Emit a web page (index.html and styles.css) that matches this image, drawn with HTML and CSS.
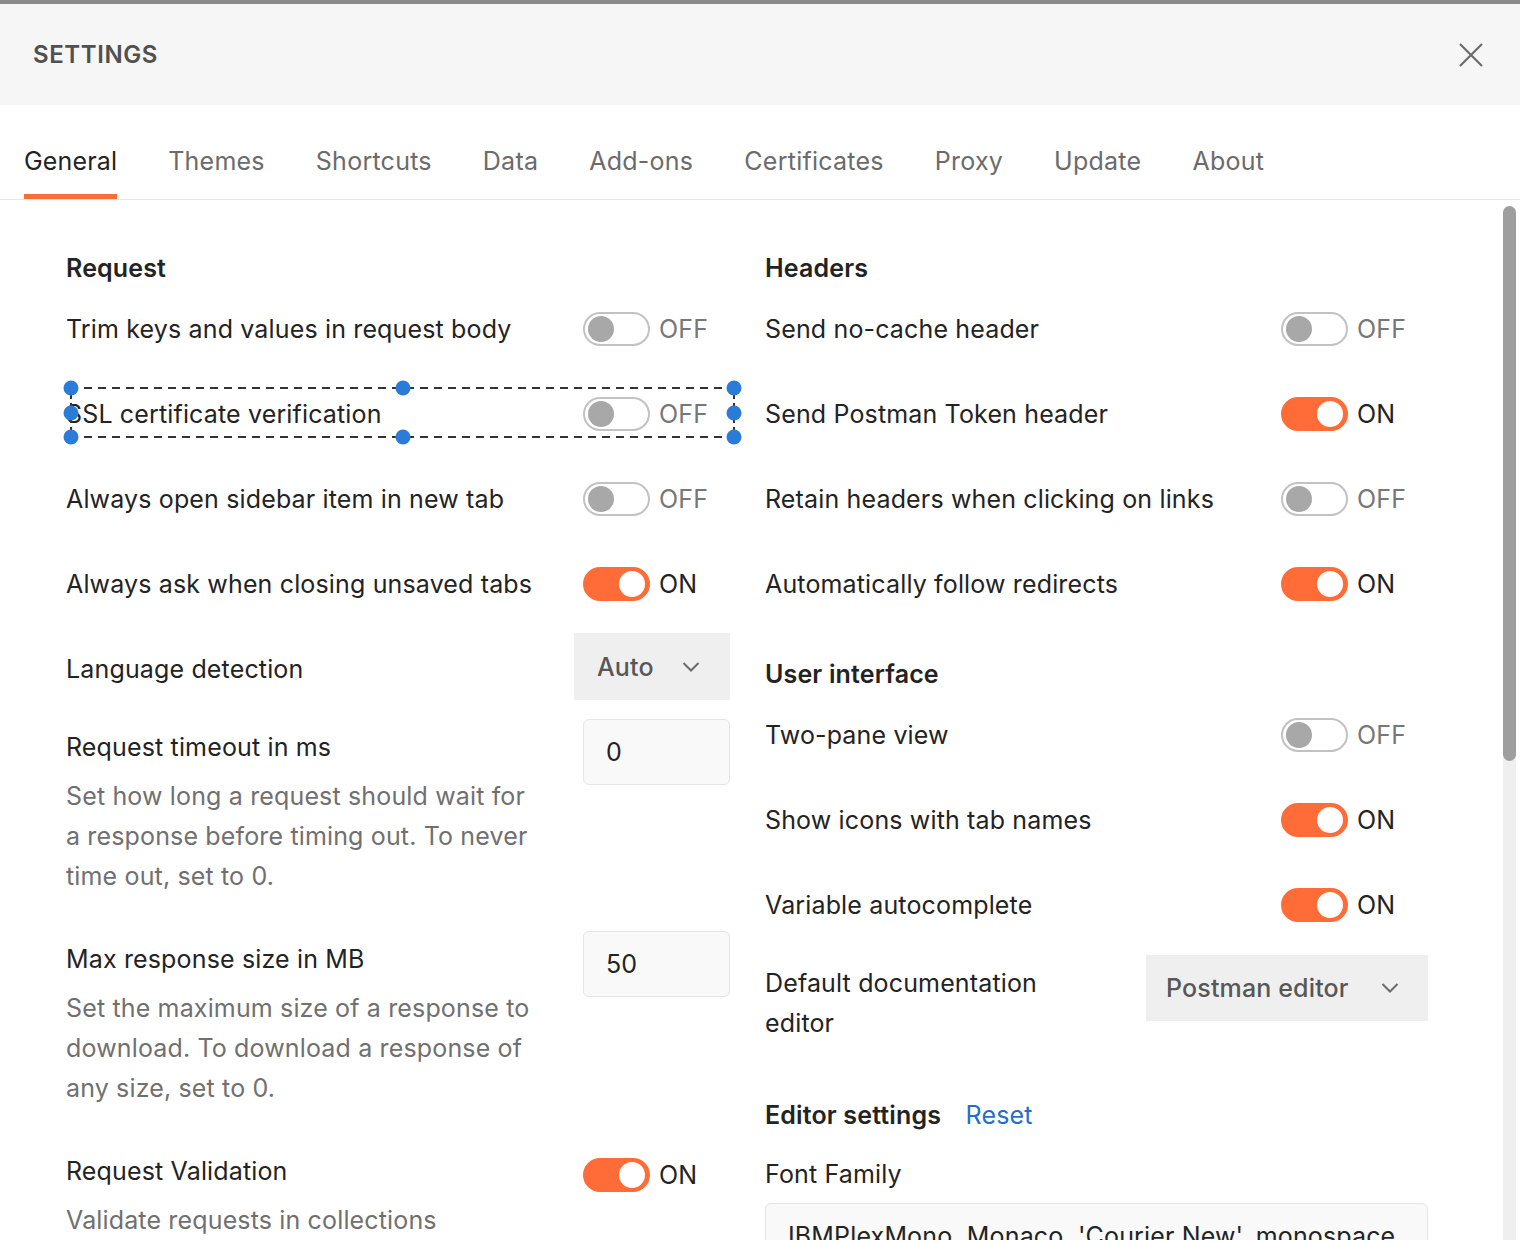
FILE: index.html
```html
<!DOCTYPE html>
<html lang="en">
<head>
    <meta charset="UTF-8">
    <meta name="viewport" content="width=device-width, initial-scale=1.0">
    <title>Settings</title>
    <link rel="stylesheet" href="styles.css">
</head>
<body>
    <div class="topbar"></div>

    <header class="modal-header">
        <h1 class="modal-title">SETTINGS</h1>
        <button class="close-btn" aria-label="Close">
            <svg width="26" height="26" viewBox="0 0 26 26">
                <path d="M2 2 L24 24 M24 2 L2 24" stroke="#6b6b6b" stroke-width="2.2" fill="none"/>
            </svg>
        </button>
    </header>

    <nav class="tabs">
        <span class="tab active">General</span>
        <span class="tab">Themes</span>
        <span class="tab">Shortcuts</span>
        <span class="tab">Data</span>
        <span class="tab">Add-ons</span>
        <span class="tab">Certificates</span>
        <span class="tab">Proxy</span>
        <span class="tab">Update</span>
        <span class="tab">About</span>
    </nav>

    <main class="panel">
        <div class="columns">
            <!-- left column -->
            <section class="col">
                <h2 class="section-title">Request</h2>

                <div class="setting">
                    <div class="setting-text"><div class="label">Trim keys and values in request body</div></div>
                    <div class="control"><span class="toggle"></span><span class="state">OFF</span></div>
                </div>

                <div class="setting selected">
                    <div class="setting-text"><div class="label">SSL certificate verification</div></div>
                    <div class="control"><span class="toggle"></span><span class="state">OFF</span></div>
                    <div class="selection">
                        <i class="handle tl"></i><i class="handle tc"></i><i class="handle tr"></i>
                        <i class="handle ml"></i><i class="handle mr"></i>
                        <i class="handle bl"></i><i class="handle bc"></i><i class="handle br"></i>
                    </div>
                </div>

                <div class="setting">
                    <div class="setting-text"><div class="label">Always open sidebar item in new tab</div></div>
                    <div class="control"><span class="toggle"></span><span class="state">OFF</span></div>
                </div>

                <div class="setting">
                    <div class="setting-text"><div class="label">Always ask when closing unsaved tabs</div></div>
                    <div class="control"><span class="toggle on"></span><span class="state on">ON</span></div>
                </div>

                <div class="setting">
                    <div class="setting-text"><div class="label">Language detection</div></div>
                    <div class="control control-select">
                        <div class="select select-auto">
                            <span>Auto</span>
                            <svg width="18" height="12" viewBox="0 0 18 12"><path d="M1.5 2 L9 9.5 L16.5 2" stroke="#6b6b6b" stroke-width="2" fill="none"/></svg>
                        </div>
                    </div>
                </div>

                <div class="setting after-select">
                    <div class="setting-text">
                        <div class="label">Request timeout in ms</div>
                        <div class="desc">Set how long a request should wait for a response before timing out. To never time out, set to 0.</div>
                    </div>
                    <div class="control control-input"><div class="input">0</div></div>
                </div>

                <div class="setting after-desc">
                    <div class="setting-text">
                        <div class="label">Max response size in MB</div>
                        <div class="desc">Set the maximum size of a response to download. To download a response of any size, set to 0.</div>
                    </div>
                    <div class="control control-input"><div class="input">50</div></div>
                </div>

                <div class="setting after-desc">
                    <div class="setting-text">
                        <div class="label">Request Validation</div>
                        <div class="desc">Validate requests in collections</div>
                    </div>
                    <div class="control control-low"><span class="toggle on"></span><span class="state on">ON</span></div>
                </div>
            </section>

            <!-- right column -->
            <section class="col">
                <h2 class="section-title">Headers</h2>

                <div class="setting">
                    <div class="setting-text"><div class="label">Send no-cache header</div></div>
                    <div class="control"><span class="toggle"></span><span class="state">OFF</span></div>
                </div>

                <div class="setting">
                    <div class="setting-text"><div class="label">Send Postman Token header</div></div>
                    <div class="control"><span class="toggle on"></span><span class="state on">ON</span></div>
                </div>

                <div class="setting">
                    <div class="setting-text"><div class="label">Retain headers when clicking on links</div></div>
                    <div class="control"><span class="toggle"></span><span class="state">OFF</span></div>
                </div>

                <div class="setting">
                    <div class="setting-text"><div class="label">Automatically follow redirects</div></div>
                    <div class="control"><span class="toggle on"></span><span class="state on">ON</span></div>
                </div>

                <h2 class="section-title">User interface</h2>

                <div class="setting">
                    <div class="setting-text"><div class="label">Two-pane view</div></div>
                    <div class="control"><span class="toggle"></span><span class="state">OFF</span></div>
                </div>

                <div class="setting">
                    <div class="setting-text"><div class="label">Show icons with tab names</div></div>
                    <div class="control"><span class="toggle on"></span><span class="state on">ON</span></div>
                </div>

                <div class="setting">
                    <div class="setting-text"><div class="label">Variable autocomplete</div></div>
                    <div class="control"><span class="toggle on"></span><span class="state on">ON</span></div>
                </div>

                <div class="setting after-select">
                    <div class="setting-text"><div class="label">Default documentation editor</div></div>
                    <div class="control control-wide">
                        <div class="select select-editor">
                            <span>Postman editor</span>
                            <svg width="18" height="12" viewBox="0 0 18 12"><path d="M1.5 2 L9 9.5 L16.5 2" stroke="#6b6b6b" stroke-width="2" fill="none"/></svg>
                        </div>
                    </div>
                </div>

                <h2 class="section-title editor-title">Editor settings <a class="reset-link">Reset</a></h2>

                <div class="field">
                    <div class="label">Font Family</div>
                    <div class="input input-wide">IBMPlexMono, Monaco, 'Courier New', monospace</div>
                </div>
            </section>
        </div>

        <div class="scroll-track"><div class="scroll-thumb"></div></div>
    </main>
</body>
</html>
```

FILE: styles.css
```css
body {
    margin: 0;
    font-family: Inter, "Noto Sans", sans-serif;
    letter-spacing: 0.15px;
    color: #232323;
    background: #fff;
    height: 1241px;
    overflow: hidden;
}

.topbar {
    height: 4px;
    background: #8a8a8a;
}

.modal-header {
    height: 101px;
    background: #f6f6f6;
    display: flex;
    align-items: center;
    justify-content: space-between;
    padding: 0 36px 0 33px;
}

.modal-title {
    margin: 0;
    font-size: 24px;
    font-weight: 600;
    letter-spacing: 0.6px;
    color: #505050;
}

.close-btn {
    background: none;
    border: none;
    padding: 0;
    width: 26px;
    height: 26px;
    cursor: pointer;
}

.tabs {
    display: flex;
    gap: 51px;
    padding: 36px 0 0 24px;
    border-bottom: 1px solid #e6e6e6;
}

.tab {
    font-size: 25px;
    line-height: 40px;
    letter-spacing: 0.25px;
    padding-bottom: 13px;
    border-bottom: 5px solid transparent;
    color: #6b6b6b;
}

.tab.active {
    color: #232323;
    letter-spacing: 0.15px;
    border-bottom-color: #ff6c37;
}

.panel {
    display: flex;
    height: 1040px;
    overflow: hidden;
}

.columns {
    display: grid;
    grid-template-columns: 664px 663px;
    column-gap: 35px;
    padding: 53px 0 0 66px;
}

.section-title {
    margin: 55px 0 0;
    font-size: 25px;
    font-weight: 600;
    line-height: 30px;
}

.section-title:first-child {
    margin-top: 0;
}

.editor-title {
    margin-top: 57px;
}

.reset-link {
    font-weight: 400;
    color: #1f6fd0;
    margin-left: 18px;
    cursor: pointer;
}

.setting {
    position: relative;
    display: flex;
    align-items: flex-start;
    margin-top: 45px;
}

.section-title + .setting {
    margin-top: 26px;
}

.setting.after-select {
    margin-top: 38px;
}

.setting.after-desc {
    margin-top: 43px;
}

.setting-text {
    flex: 1;
    padding-right: 42px;
    font-size: 25px;
}

.label {
    font-size: 25px;
    line-height: 40px;
}

.desc {
    max-width: 470px;
    margin-top: 9px;
    line-height: 40px;
    color: #707070;
}

.control {
    width: 147px;
    height: 40px;
    display: flex;
    align-items: center;
    gap: 9px;
}

.control-input {
    align-items: flex-start;
}

.control-low {
    margin-top: 4px;
}

.control-select {
    width: 156px;
    align-items: flex-start;
}

.control-wide {
    width: 282px;
    align-items: flex-start;
}

/* toggle switch */
.toggle {
    position: relative;
    width: 67px;
    height: 34px;
    box-sizing: border-box;
    border: 2px solid #c2c2c2;
    border-radius: 17px;
    background: #fff;
    flex-shrink: 0;
}

.toggle::after {
    content: "";
    position: absolute;
    top: 2px;
    left: 3px;
    width: 26px;
    height: 26px;
    border-radius: 50%;
    background: #a8a8a8;
}

.toggle.on {
    background: #ff6c37;
    border-color: #ff6c37;
}

.toggle.on::after {
    left: auto;
    right: 3px;
    background: #fff;
}

.state {
    font-size: 25px;
    color: #777;
}

.state.on {
    color: #232323;
}

/* dropdowns and inputs */
.select {
    display: flex;
    align-items: center;
    justify-content: space-between;
    height: 67px;
    box-sizing: border-box;
    background: #efefef;
    font-size: 25px;
    font-weight: 500;
    color: #575757;
}

.select-auto {
    width: 156px;
    margin-top: -16px;
    padding: 0 30px 0 23px;
}

.select-editor {
    width: 282px;
    margin-top: -8px;
    height: 66px;
    padding: 0 29px 0 20px;
}

.input {
    width: 147px;
    height: 66px;
    margin-top: -8px;
    box-sizing: border-box;
    border: 1px solid #e6e6e6;
    border-radius: 6px;
    background: #f9f9f9;
    padding-left: 22px;
    font-size: 25px;
    line-height: 64px;
    color: #232323;
}

.field {
    margin-top: 24px;
}

.input-wide {
    width: 663px;
    margin-top: 9px;
    white-space: nowrap;
    overflow: hidden;
}

/* selection outline drawn over the SSL row */
.selection {
    position: absolute;
    left: 4px;
    right: -5px;
    top: -7px;
    height: 51px;
    background:
        repeating-linear-gradient(90deg, #333 0 8px, transparent 8px 14px) top left / 100% 2px no-repeat,
        repeating-linear-gradient(90deg, #333 0 8px, transparent 8px 14px) bottom left / 100% 2px no-repeat,
        repeating-linear-gradient(180deg, #333 0 4px, transparent 4px 8px) top left / 2px 100% no-repeat,
        repeating-linear-gradient(180deg, #333 0 4px, transparent 4px 8px) top right / 2px 100% no-repeat;
}

.handle {
    position: absolute;
    width: 15px;
    height: 15px;
    border-radius: 50%;
    background: #2b7bd9;
    transform: translate(-50%, -50%);
}

.handle.tl { left: 1px; top: 1px; }
.handle.tc { left: 50%; top: 1px; }
.handle.tr { left: calc(100% - 1px); top: 1px; }
.handle.ml { left: 1px; top: 50%; }
.handle.mr { left: calc(100% - 1px); top: 50%; }
.handle.bl { left: 1px; top: calc(100% - 1px); }
.handle.bc { left: 50%; top: calc(100% - 1px); }
.handle.br { left: calc(100% - 1px); top: calc(100% - 1px); }

/* scrollbar */
.scroll-track {
    margin: 6px 4px 0 auto;
    width: 13px;
    height: 1040px;
    border-radius: 7px;
    background: #efefef;
}

.scroll-thumb {
    height: 555px;
    border-radius: 7px;
    background: #9e9e9e;
}
```
